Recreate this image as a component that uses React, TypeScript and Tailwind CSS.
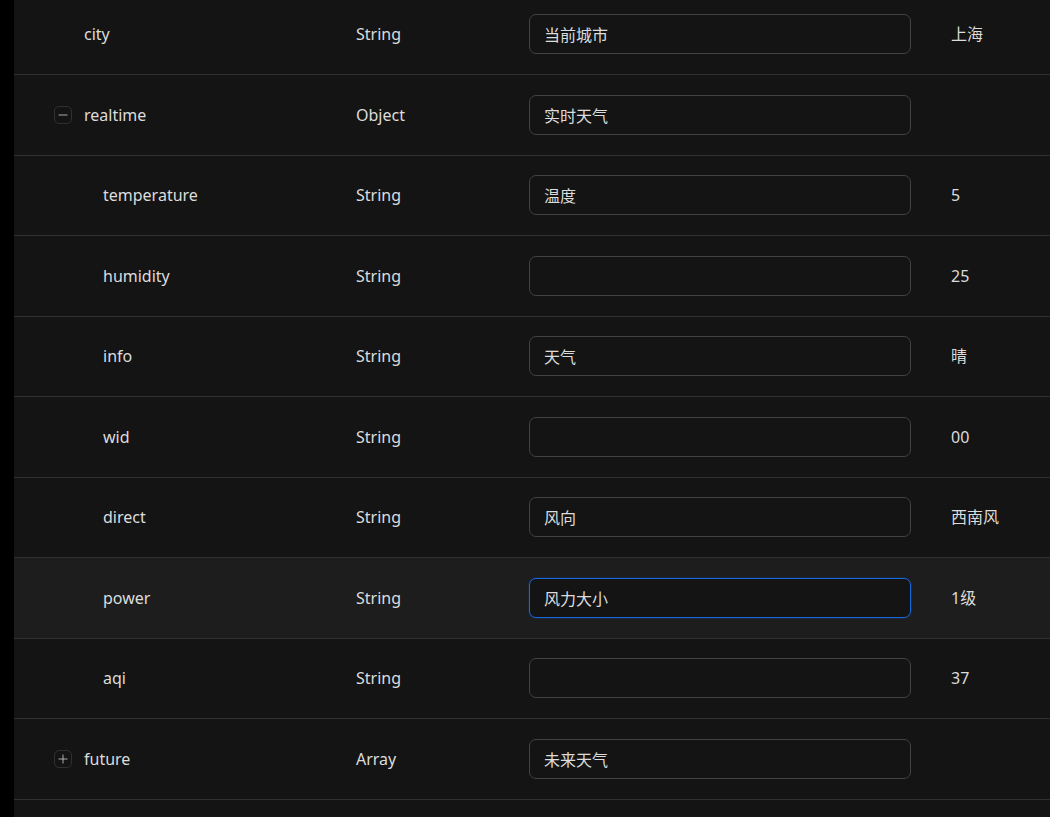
import { Minus, Plus } from "lucide-react";

type Row = {
  name: string;
  type: string;
  desc: string;
  value: string;
  level: number;
  expand?: "open" | "closed";
  active?: boolean;
};

const rows: Row[] = [
  { name: "city", type: "String", desc: "当前城市", value: "上海", level: 0 },
  { name: "realtime", type: "Object", desc: "实时天气", value: "", level: 0, expand: "open" },
  { name: "temperature", type: "String", desc: "温度", value: "5", level: 1 },
  { name: "humidity", type: "String", desc: "", value: "25", level: 1 },
  { name: "info", type: "String", desc: "天气", value: "晴", level: 1 },
  { name: "wid", type: "String", desc: "", value: "00", level: 1 },
  { name: "direct", type: "String", desc: "风向", value: "西南风", level: 1 },
  { name: "power", type: "String", desc: "风力大小", value: "1级", level: 1, active: true },
  { name: "aqi", type: "String", desc: "", value: "37", level: 1 },
  { name: "future", type: "Array", desc: "未来天气", value: "", level: 0, expand: "closed" },
  { name: "", type: "", desc: "", value: "", level: 0 },
];

function ExpandIcon({ state }: { state: "open" | "closed" }) {
  return (
    <span className="absolute left-[40px] top-1/2 -translate-y-1/2 w-[18px] h-[18px] rounded-[5px] border border-[#303030] flex items-center justify-center text-[#d9d9d9]">
      {state === "open" ? <Minus size={14} strokeWidth={1.3} /> : <Plus size={14} strokeWidth={1.3} />}
    </span>
  );
}

export default function App() {
  return (
    <div
      className="w-[1050px] h-[817px] overflow-hidden flex bg-black text-[16px] text-[#dcdcdc]"
      style={{ fontFamily: '"Noto Sans", "Noto Sans CJK SC", sans-serif' }}
    >
      <div className="w-[14px] shrink-0 bg-black" />
      <div className="flex-1 bg-[#141414] overflow-hidden">
        <div className="mt-[-5.5px]">
          {rows.map((row, i) => (
            <div
              key={i}
              className={
                "h-[80.5px] flex items-center border-b border-[#303030] " +
                (row.active ? "bg-[#1d1d1d]" : "bg-[#141414]")
              }
            >
              <div className="relative w-[326px] h-full flex items-center">
                {row.expand && <ExpandIcon state={row.expand} />}
                <span className={row.level === 0 ? "pl-[70px]" : "pl-[89px]"}>{row.name}</span>
              </div>
              <div className="w-[173px] pl-[16px]">{row.type}</div>
              <div className="w-[423px] pl-[16px] pr-[25px]">
                {row.type && (
                  <input
                    readOnly
                    value={row.desc}
                    className={
                      "w-[382px] h-[40px] rounded-[7px] bg-[#141414] border px-[14px] text-[16px] text-[#dcdcdc] outline-none " +
                      (row.active ? "border-[#1668dc] shadow-[0_0_0_1px_rgba(22,104,220,0.15)]" : "border-[#424242]")
                    }
                    style={{ fontFamily: '"Noto Sans", "Noto Sans CJK SC", sans-serif' }}
                  />
                )}
              </div>
              <div className="flex-1 pl-[15px]">{row.value}</div>
            </div>
          ))}
        </div>
      </div>
    </div>
  );
}
